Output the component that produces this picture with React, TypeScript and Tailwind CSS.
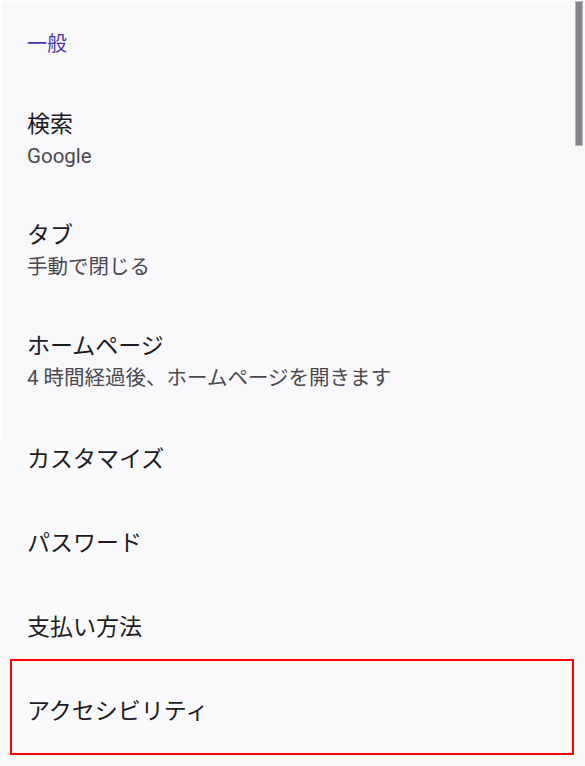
import React from 'react';

type Item = { title: string; sub?: string };

const general: Item[] = [
  { title: '検索', sub: 'Google' },
  { title: 'タブ', sub: '手動で閉じる' },
  { title: 'ホームページ', sub: '4 時間経過後、ホームページを開きます' },
];

const font = { fontFamily: 'Roboto, "Noto Sans CJK JP", sans-serif' };

const App: React.FC = () => {
  return (
    <div className="w-[585px] h-[766px] bg-[#fafafc] overflow-hidden" style={font}>
      {/* upper part */}
      <div className="relative h-[440px] bg-[#f8f8fa] border-l border-t border-[#fefefe]">
        <div className="pl-[26px] pt-[31px] pb-[29px] text-[20px] leading-[24px] text-[#4a36a8]">一般</div>
        {general.map((it) => (
          <div key={it.title} className="h-[111px] pl-[26px] pt-[25px]">
            <div className="text-[23px] leading-[30px] text-[#1c1b1f]">{it.title}</div>
            <div className="text-[20.5px] leading-[32px] text-[#4a4950]">{it.sub}</div>
          </div>
        ))}
        <div className="absolute top-0 left-[574px] w-[8px] h-[145px] bg-[#858489] border border-[#b4b3b8]" />
      </div>

      {/* lower part */}
      <div className="pl-[27px]">
        <div className="h-[62px] text-[23px] leading-[40px] text-[#1c1b1f]">カスタマイズ</div>
        <div className="h-[84px] flex items-center text-[23px] text-[#1c1b1f]">パスワード</div>
        <div className="h-[84px] flex items-center text-[23px] text-[#1c1b1f]">支払い方法</div>
        <div className="relative h-[84px] flex items-center text-[23px] text-[#1c1b1f]">
          アクセシビリティ
          <div className="absolute top-[-11px] bottom-[-1px] left-[-17px] right-[11px] border-2 border-[#ff0000]" />
        </div>
      </div>
    </div>
  );
};

export default App;
